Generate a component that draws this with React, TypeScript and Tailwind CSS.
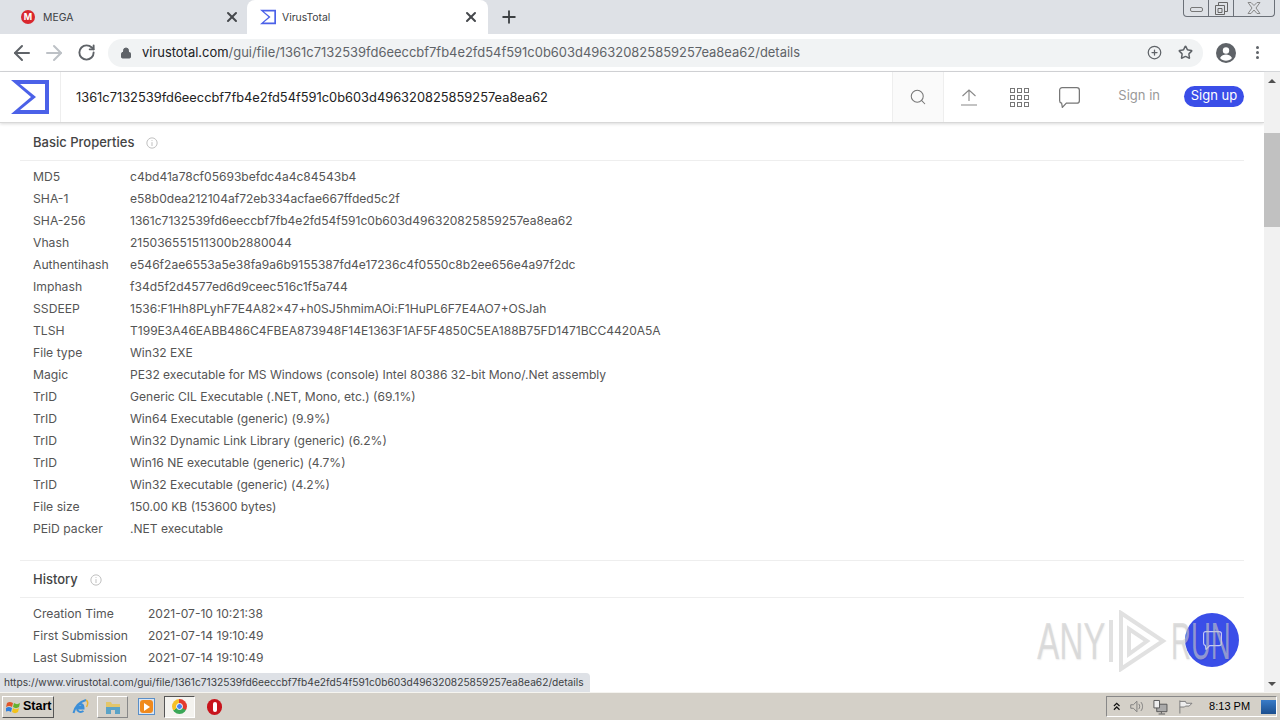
import type { ReactNode } from "react";
import { ArrowLeft, ArrowRight, RotateCw, Lock, Star, Plus, X, Search, PlusCircle } from "lucide-react";

const basic: [string, string][] = [
  ["MD5", "c4bd41a78cf05693befdc4a4c84543b4"],
  ["SHA-1", "e58b0dea212104af72eb334acfae667ffded5c2f"],
  ["SHA-256", "1361c7132539fd6eeccbf7fb4e2fd54f591c0b603d496320825859257ea8ea62"],
  ["Vhash", "215036551511300b2880044"],
  ["Authentihash", "e546f2ae6553a5e38fa9a6b9155387fd4e17236c4f0550c8b2ee656e4a97f2dc"],
  ["Imphash", "f34d5f2d4577ed6d9ceec516c1f5a744"],
  ["SSDEEP", "1536:F1Hh8PLyhF7E4A82x47+h0SJ5hmimAOi:F1HuPL6F7E4AO7+OSJah"],
  ["TLSH", "T199E3A46EABB486C4FBEA873948F14E1363F1AF5F4850C5EA188B75FD1471BCC4420A5A"],
  ["File type", "Win32 EXE"],
  ["Magic", "PE32 executable for MS Windows (console) Intel 80386 32-bit Mono/.Net assembly"],
  ["TrID", "Generic CIL Executable (.NET, Mono, etc.) (69.1%)"],
  ["TrID", "Win64 Executable (generic) (9.9%)"],
  ["TrID", "Win32 Dynamic Link Library (generic) (6.2%)"],
  ["TrID", "Win16 NE executable (generic) (4.7%)"],
  ["TrID", "Win32 Executable (generic) (4.2%)"],
  ["File size", "150.00 KB (153600 bytes)"],
  ["PEiD packer", ".NET executable"],
];

const history: [string, string][] = [
  ["Creation Time", "2021-07-10 10:21:38"],
  ["First Submission", "2021-07-14 19:10:49"],
  ["Last Submission", "2021-07-14 19:10:49"],
];

function Sigma({ className }: { className: string }) {
  return (
    <svg viewBox="0 0 38 34" className={className}>
      <path fillRule="evenodd" fill="#4b61e8" d="M0 0h38v34H0l20-17zM9 4l16 13L9 30h25V4z" />
    </svg>
  );
}

function InfoIcon() {
  return (
    <svg viewBox="0 0 14 14" className="w-3 h-3" fill="none" stroke="#b5b5b5">
      <circle cx="7" cy="7" r="6" />
      <path d="M7 3.500v1M7 6v4.500" />
    </svg>
  );
}

function Row({ label, value, labelWidth }: { label: string; value: string; labelWidth: string }) {
  return (
    <div className="flex h-[22px] items-center text-[#555]">
      <div className={`${labelWidth} text-[12.2px]`}>{label}</div>
      <div className="whitespace-nowrap text-[12.05px]">{value}</div>
    </div>
  );
}

function Tab({ title, active, icon }: { title: string; active?: boolean; icon: ReactNode }) {
  return (
    <div
      className={`flex items-center pl-[13px] text-[10.4px] text-[#3c4043] ${
        active ? "w-[241px] gap-[6px] rounded-t-lg bg-white pr-[9px]" : "w-[239px] gap-[8px] pr-[7px]"
      }`}
    >
      {icon}
      <span className="flex-1 pt-px">{title}</span>
      <X className="h-[16px] w-[16px] text-[#45484c]" strokeWidth={3} />
    </div>
  );
}

function AppGrid() {
  return (
    <div className="grid grid-cols-3 gap-[2px]">
      {Array.from({ length: 9 }).map((_, i) => (
        <div key={i} className="h-[5px] w-[5px] border border-[#777]" />
      ))}
    </div>
  );
}

function ChatBubble({ className, stroke }: { className: string; stroke: string }) {
  return (
    <svg viewBox="0 0 20 20" className={className} fill="none" stroke={stroke} strokeWidth="1.2">
      <path d="M3 .6h14c1.400 0 2.400 1 2.400 2.400v10c0 1.400-1 2.400-2.400 2.400H7l-3.800 4-.700-4C1.300 15.100.6 14.200.6 13V3C.6 1.600 1.600.6 3 .6z" />
    </svg>
  );
}

export default function App() {
  return (
    <div className="relative flex h-[720px] w-[1280px] flex-col overflow-hidden bg-white font-['Inter',sans-serif]">
      {/* tab strip */}
      <div className="flex h-[34px] items-stretch bg-[#dee1e6] pl-[8px]">
        <Tab
          title="MEGA"
          icon={
            <div className="flex h-[14px] w-[14px] items-center justify-center rounded-full bg-[#d9272e] text-[9px] font-bold text-white">M</div>
          }
        />
        <Tab title="VirusTotal" active icon={<Sigma className="h-[16px] w-[16px]" />} />
        <div className="flex w-[42px] items-center justify-center">
          <Plus className="h-[20px] w-[20px] text-[#3c4043]" strokeWidth={2.2} />
        </div>
        {/* window controls */}
        <div className="ml-auto mr-[5px] flex h-[17px] w-[92px] self-start rounded-b-[4px] border border-t-0 border-[#6b7078]">
          <div className="flex w-[25px] items-center justify-center border-r border-[#6b7078]">
            <div className="mt-[3px] h-[5px] w-[13px] rounded-[2px] border border-[#777]" />
          </div>
          <div className="flex w-[25px] items-center justify-center border-r border-[#6b7078]">
            <svg viewBox="0 0 13 13" className="h-[13px] w-[13px]" fill="none" stroke="#666">
              <path d="M3.500 3V.5h9v9H10" />
              <path d="M.5 3.500h9v9h-9zM3 6.500h4v4H3z" />
            </svg>
          </div>
          <div className="flex flex-1 items-center justify-center">
            <svg viewBox="0 0 14 12" className="h-[12px] w-[14px]" fill="none" stroke="#888">
              <path d="M1 .5h3l3 3 3-3h3L9 6l4 5.500h-3l-3-3.500-3 3.500H1L5 6z" />
            </svg>
          </div>
        </div>
      </div>

      {/* toolbar */}
      <div className="flex h-[38px] items-center border-b border-[#d4d6d9] bg-white pl-[10px]">
        <ArrowLeft className="h-[24px] w-[24px] text-[#5f6368]" />
        <ArrowRight className="ml-[8px] h-[24px] w-[24px] text-[#bdc1c6]" />
        <RotateCw className="ml-[11px] h-[19px] w-[19px] text-[#5f6368]" strokeWidth={2.4} />
        <div className="ml-[12px] flex h-[28px] w-[1095px] items-center rounded-full bg-[#f1f3f4] pl-[12px] pr-[10px]">
          <Lock className="h-[12px] w-[12px] text-[#5f6368]" fill="#5f6368" />
          <div className="ml-[10px] flex-1 whitespace-nowrap text-[12.95px] text-[#5f6368]">
            <span className="text-[#202124]">virustotal.com</span>
            /gui/file/1361c7132539fd6eeccbf7fb4e2fd54f591c0b603d496320825859257ea8ea62/details
          </div>
          <PlusCircle className="h-[15px] w-[15px] text-[#5f6368]" />
          <Star className="ml-[16px] h-[15px] w-[15px] text-[#5f6368]" strokeWidth={2.4} />
        </div>
        <div className="ml-[13px] flex h-[20px] w-[20px] items-center justify-center overflow-hidden rounded-full bg-[#5f6368]">
          <svg viewBox="0 0 20 20" className="h-5 w-5" fill="white">
            <circle cx="10" cy="7.500" r="3.200" />
            <path d="M4 15c1.500-2.600 3.800-3.400 6-3.400s4.500.8 6 3.400c-1.500 1.800-3.700 2.800-6 2.800s-4.500-1-6-2.800z" />
          </svg>
        </div>
        <div className="ml-[20px] flex flex-col gap-[2px]">
          <div className="h-[3px] w-[3px] rounded-full bg-[#5f6368]" />
          <div className="h-[3px] w-[3px] rounded-full bg-[#5f6368]" />
          <div className="h-[3px] w-[3px] rounded-full bg-[#5f6368]" />
        </div>
      </div>

      {/* page */}
      <div className="flex min-h-0 flex-1">
        <div className="flex min-w-0 flex-1 flex-col">
          {/* virustotal header */}
          <div className="flex h-[51px] shrink-0 items-center border-b border-[#d8d8d8] shadow-[0_1px_3px_rgba(0,0,0,0.15)]">
            <div className="flex h-full w-[61px] items-center justify-start border-r border-[#eeeeee] pl-[11px]">
              <Sigma className="h-[34px] w-[38px]" />
            </div>
            <div className="flex-1 pl-[15px] pt-px text-[12.85px] text-[#222]">
              1361c7132539fd6eeccbf7fb4e2fd54f591c0b603d496320825859257ea8ea62
            </div>
            <div className="flex h-full w-[52px] items-center justify-center border-x border-[#eeeeee] bg-[#fafafa]">
              <Search className="h-[18px] w-[18px] text-[#777]" strokeWidth={1.4} />
            </div>
            <div className="flex w-[50px] justify-center">
              <svg viewBox="0 0 18 17" className="h-[17px] w-[18px]" fill="none" stroke="#888" strokeWidth="1.1">
                <path d="M9 12V1.500M2.500 7L9 1l6.500 6M1 16h16" />
              </svg>
            </div>
            <div className="flex w-[50px] justify-center">
              <AppGrid />
            </div>
            <div className="flex w-[50px] justify-center">
              <ChatBubble className="h-[21px] w-[21px]" stroke="#777" />
            </div>
            <div className="mb-[2px] ml-[24px] text-[13px] text-[#999]">Sign in</div>
            <div className="mb-[2px] ml-[24px] mr-[20px] flex h-[21px] w-[60px] items-center justify-center rounded-full bg-[#3a4ee8] text-[13px] text-white">
              Sign up
            </div>
          </div>

          {/* details */}
          <div className="min-h-0 flex-1 overflow-hidden px-[20px]">
            <div className="flex h-[38px] items-center gap-[12px] border-b border-[#eeeeee] pl-[13px] pt-[2px] text-[13px] font-medium text-[#444]">
              Basic Properties
              <InfoIcon />
            </div>
            <div className="border-b border-[#eeeeee] pb-[20px] pl-[13px] pt-[5px]">
              {basic.map(([label, value], i) => (
                <Row key={i} label={label} value={value} labelWidth="w-[97px]" />
              ))}
            </div>
            <div className="flex h-[37px] items-center gap-[12px] border-b border-[#eeeeee] pl-[13px] pt-[2px] text-[13px] font-medium text-[#444]">
              History
              <InfoIcon />
            </div>
            <div className="pl-[13px] pt-[5px]">
              {history.map(([label, value]) => (
                <Row key={label} label={label} value={value} labelWidth="w-[115px]" />
              ))}
            </div>
          </div>
        </div>

        {/* scrollbar */}
        <div className="flex w-[16px] flex-col items-center bg-[#f1f1f1]">
          <div className="flex h-[17px] w-full items-center justify-center">
            <div className="h-0 w-0 border-x-[4px] border-b-[4px] border-x-transparent border-b-[#505050]" />
          </div>
          <div className="mt-[44px] h-[94px] w-full bg-[#c1c1c1]" />
          <div className="mt-auto flex h-[17px] w-full items-center justify-center">
            <div className="h-0 w-0 border-x-[4px] border-t-[4px] border-x-transparent border-t-[#505050]" />
          </div>
        </div>
      </div>

      {/* taskbar */}
      <div className="flex h-[28px] shrink-0 items-center border-t border-[#f5f4f0] bg-[#d4d0c8] pl-[2px] font-['Liberation_Sans',sans-serif]">
        <div className="flex h-[22px] w-[52px] items-center gap-[2px] border border-[#555] border-l-white border-t-white pl-[3px] text-[12.5px] font-bold text-black">
          <svg viewBox="0 0 15 14" className="h-[14px] w-[15px]">
            <path d="M1 3c2-1.500 3.500-1.500 6 0L6 7C4 5.500 2.500 5.500 0 7z" fill="#e0562a" />
            <path d="M8 3c2 1.500 4 1.500 6 0l-1 4c-2 1.500-4 1.500-6 0z" fill="#66b22e" />
            <path d="M0 8c2-1.500 3.500-1.500 6 0l-1 4c-2-1.500-3.500-1.500-6 0z" fill="#2f7fdc" />
            <path d="M7 8c2 1.500 4 1.500 6 0l-1 4c-2 1.500-4 1.500-6 0z" fill="#f2c21b" />
          </svg>
          Start
        </div>
        <svg viewBox="0 0 18 18" className="ml-[17px] h-[18px] w-[18px]" fill="none">
          <path d="M13.500 10.500H6c0 3 3.500 4.500 6.500 2.500M5.800 8.500h6.500c-.3-3-5.500-3.500-6.500 0zM2.500 15C4 9 8 4 15 2" stroke="#3c8fd8" strokeWidth="2" />
          <path d="M15 2c2 1 2 4 .5 7" stroke="#e8b432" strokeWidth="1.500" />
        </svg>
        <div className="ml-[8px] flex h-[22px] w-[31px] items-center justify-center border border-[#888] border-l-white border-t-white">
          <svg viewBox="0 0 16 16" className="h-[16px] w-[16px]">
            <path d="M1 3h5l1 2h8v4H1z" fill="#e3c66a" />
            <path d="M1 8h14v7H10v-4H6v4H1z" fill="#5ba3c7" />
          </svg>
        </div>
        <div className="ml-[10px] flex h-[17px] w-[17px] items-center justify-center border border-[#5a8fc8] bg-[#dce6f2]">
          <div className="flex h-[13px] w-[13px] items-center justify-center rounded-[3px] bg-[#f08a1d]">
            <div className="ml-px h-0 w-0 border-y-[4px] border-l-[6px] border-y-transparent border-l-white" />
          </div>
        </div>
        <div className="ml-[9px] flex h-[22px] w-[31px] items-center justify-center border border-white border-l-[#555] border-t-[#555] bg-[#f4f3ef]">
          <div className="flex h-[15px] w-[15px] items-center justify-center rounded-full bg-[conic-gradient(#e33b2e_0_33%,#3aa757_33%_66%,#f6c026_66%)]">
            <div className="h-[7px] w-[7px] rounded-full border border-white bg-[#4285f4]" />
          </div>
        </div>
        <div className="ml-[12px] flex h-[16px] w-[15px] items-center justify-center rounded-full bg-[#c8141c]">
          <div className="h-[10px] w-[4px] rounded-full bg-white" />
        </div>
        <div className="ml-auto mr-[3px] flex h-[21px] w-[171px] items-center border border-[#888] border-b-white border-r-white pl-[6px] text-black">
          <svg viewBox="0 0 8 9" className="h-[9px] w-[8px]" fill="none" stroke="#111" strokeWidth="1.300">
            <path d="M1 4l3-3 3 3M1 8l3-3 3 3" />
          </svg>
          <svg viewBox="0 0 18 16" className="ml-[9px] h-[15px] w-[17px]" fill="none" stroke="#777">
            <path d="M2 6h3l4-4v12l-4-4H2zM11 5c1.500 1.500 1.500 4.500 0 6M13.500 3c2.500 2.500 2.500 7.500 0 10" />
          </svg>
          <svg viewBox="0 0 16 16" className="ml-[8px] h-[16px] w-[16px]" fill="none" stroke="#555">
            <path d="M4 5h11v8H4z" fill="#aaa" />
            <path d="M1 1h6v8H1z" fill="#eee" />
            <path d="M9 13v2M6 15.500h7" />
          </svg>
          <svg viewBox="0 0 16 16" className="ml-[10px] h-[16px] w-[16px]" fill="none" stroke="#777">
            <path d="M2 1v14M2 2h6l1 2h6l-3 3H8L7 8H2" fill="#eee" />
          </svg>
          <span className="ml-[16px] whitespace-nowrap text-[11px]">8:13 PM</span>
          <div className="ml-[11px] h-[14px] w-[16px] bg-gradient-to-b from-[#3a7cc8] to-[#1c4f8f]" />
        </div>
      </div>

      {/* link preview */}
      <div className="absolute bottom-[28px] left-0 flex h-[19px] w-[590px] items-center whitespace-nowrap rounded-tr bg-[#dee1e6] pl-[4px] text-[10.2px] text-[#3c4043]">
        https://www.virustotal.com/gui/file/1361c7132539fd6eeccbf7fb4e2fd54f591c0b603d496320825859257ea8ea62/details
      </div>

      {/* chat button */}
      <div className="absolute left-[1185px] top-[613px] flex h-[54px] w-[54px] items-center justify-center rounded-full bg-[#3a4ee8]">
        <ChatBubble className="h-[19px] w-[21px]" stroke="rgba(255,255,255,0.7)" />
      </div>

      {/* watermark */}
      <div className="absolute left-[1037px] top-[610px] flex h-[62px] items-center font-['Liberation_Sans',sans-serif] text-[52px] text-[rgba(205,205,205,0.6)] [text-shadow:1px_1px_2px_rgba(0,0,0,0.08)]">
        <div className="w-[70px] origin-left scale-x-[0.64] whitespace-nowrap">ANY</div>
        <svg viewBox="0 0 60 62" className="h-[62px] w-[60px]" fill="none" stroke="currentColor" strokeWidth="4">
          <path d="M4 10v42M14 3l42 28-42 28zM22 19l18 12-18 13z" />
        </svg>
        <div className="ml-[4px] w-[60px] origin-left scale-x-[0.53] whitespace-nowrap">RUN</div>
      </div>
    </div>
  );
}
